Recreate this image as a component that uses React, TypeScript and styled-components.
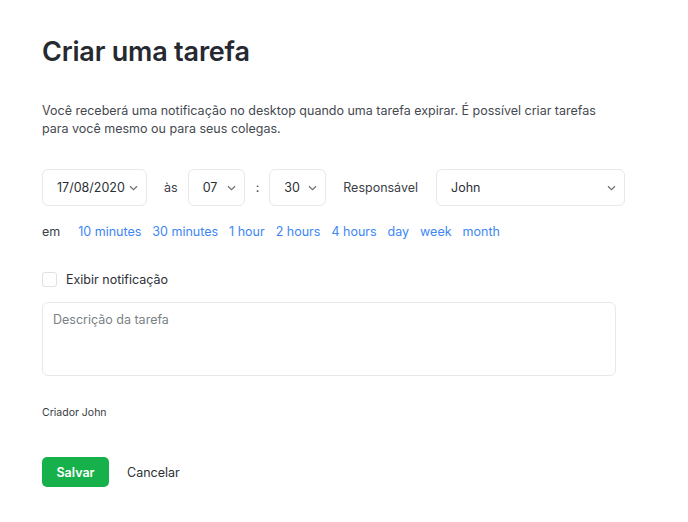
import styled, { createGlobalStyle } from "styled-components";

const GlobalStyle = createGlobalStyle`
  body {
    margin: 0;
    background: #ffffff;
    font-family: Inter, "Noto Sans", sans-serif;
    color: #2c3036;
  }
`;

const Page = styled.div`
  padding: 36px 42px 0 42px;
  width: 688px;
  box-sizing: border-box;
`;

const Title = styled.h1`
  margin: 0;
  font-size: 27px;
  font-weight: 600;
  letter-spacing: -0.2px;
  color: #262a30;
  line-height: 32px;
`;

const Intro = styled.p`
  margin: 34px 0 0 0;
  font-size: 12.5px;
  line-height: 18px;
  color: #454950;
  max-width: 560px;
`;

const TimeRow = styled.div`
  display: flex;
  align-items: center;
  margin-top: 31px;
`;

const Select = styled.div<{ w: number }>`
  display: flex;
  align-items: center;
  justify-content: space-between;
  width: ${({ w }) => w}px;
  height: 37px;
  box-sizing: border-box;
  border: 1px solid #e7e8ea;
  border-radius: 6px;
  padding: 0 8px 0 14px;
  font-size: 12.5px;
  color: #2c3036;
`;

const Label = styled.span<{ ml: number; mr: number }>`
  font-size: 12.5px;
  color: #3c4047;
  margin: 0 ${({ mr }) => mr}px 0 ${({ ml }) => ml}px;
`;

const Chevron = () => (
  <svg width="9" height="6" viewBox="0 0 9 6">
    <path d="M1 1.2L4.5 4.6L8 1.2" fill="none" stroke="#6b7078" strokeWidth="1.2" />
  </svg>
);

const QuickRow = styled.div`
  display: flex;
  align-items: center;
  gap: 11px;
  margin-top: 18px;
  font-size: 12.5px;
`;

const Em = styled.span`
  color: #3c4047;
  margin-right: 7px;
`;

const QuickLink = styled.a`
  color: #3d86f4;
  text-decoration: none;
  cursor: pointer;
`;

const CheckRow = styled.label`
  display: flex;
  align-items: center;
  gap: 9px;
  margin-top: 33px;
  font-size: 12.5px;
  color: #2c3036;
`;

const Box = styled.span`
  width: 15px;
  height: 15px;
  border: 1px solid #dfe1e4;
  border-radius: 3px;
  box-sizing: border-box;
`;

const Description = styled.div`
  margin-top: 15px;
  width: 574px;
  height: 74px;
  box-sizing: border-box;
  border: 1px solid #e7e8ea;
  border-radius: 6px;
  padding: 9px 10px;
  font-size: 12.5px;
  color: #7b7f86;
`;

const Creator = styled.div`
  margin-top: 30px;
  font-size: 10.5px;
  color: #383c42;
`;

const Actions = styled.div`
  display: flex;
  align-items: center;
  gap: 18px;
  margin-top: 38px;
`;

const SaveButton = styled.button`
  background: #17b14c;
  color: #ffffff;
  border: none;
  border-radius: 5px;
  height: 30px;
  width: 67px;
  font-family: inherit;
  font-size: 12.5px;
  font-weight: 600;
  cursor: pointer;
`;

const CancelButton = styled.button`
  background: none;
  border: none;
  padding: 0;
  font-family: inherit;
  font-size: 12.5px;
  color: #2c3036;
  cursor: pointer;
`;

const links = ["10 minutes", "30 minutes", "1 hour", "2 hours", "4 hours", "day", "week", "month"];

export default function App() {
  return (
    <>
      <GlobalStyle />
      <Page>
        <Title>Criar uma tarefa</Title>
        <Intro>
          Você receberá uma notificação no desktop quando uma tarefa expirar. É possível criar tarefas
          para você mesmo ou para seus colegas.
        </Intro>
        <TimeRow>
          <Select w={105}>
            17/08/2020 <Chevron />
          </Select>
          <Label ml={17} mr={10}>às</Label>
          <Select w={57}>
            07 <Chevron />
          </Select>
          <Label ml={11} mr={10}>:</Label>
          <Select w={57}>
            30 <Chevron />
          </Select>
          <Label ml={17} mr={18}>Responsável</Label>
          <Select w={189}>
            John <Chevron />
          </Select>
        </TimeRow>
        <QuickRow>
          <Em>em</Em>
          {links.map((l) => (
            <QuickLink key={l}>{l}</QuickLink>
          ))}
        </QuickRow>
        <CheckRow>
          <Box />
          Exibir notificação
        </CheckRow>
        <Description>Descrição da tarefa</Description>
        <Creator>Criador John</Creator>
        <Actions>
          <SaveButton>Salvar</SaveButton>
          <CancelButton>Cancelar</CancelButton>
        </Actions>
      </Page>
    </>
  );
}
